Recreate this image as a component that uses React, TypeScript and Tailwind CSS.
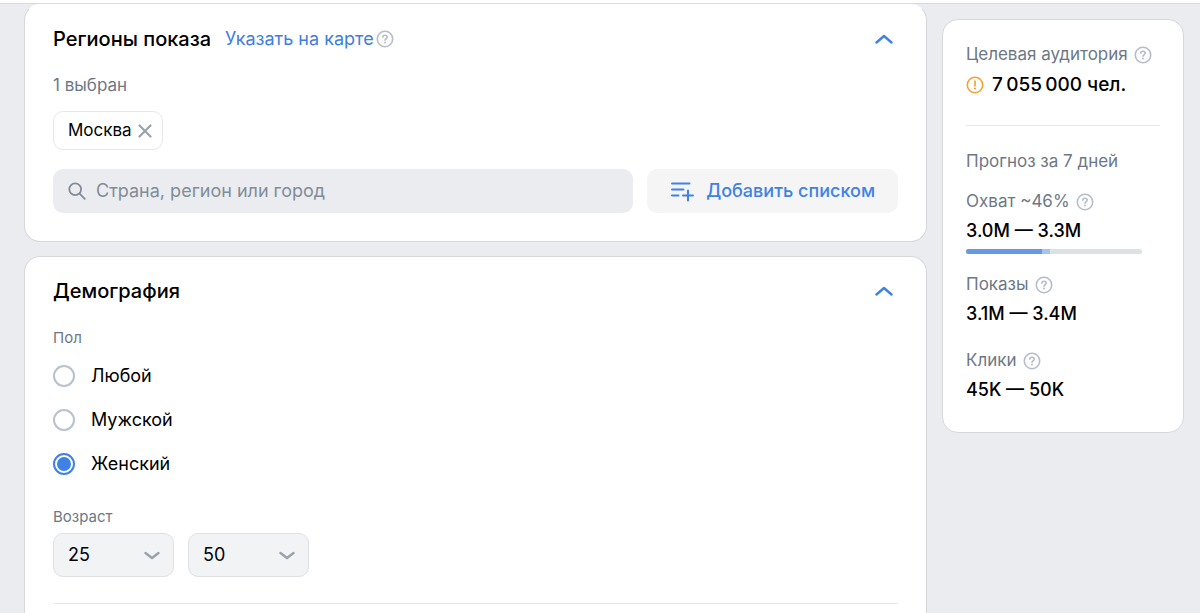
import { useState } from "react";
import type { ReactNode } from "react";

const genders = ["Любой", "Мужской", "Женский"];
const ages = Array.from({ length: 62 }, (_, i) => String(i + 14));

const HelpIcon = ({ label }: { label: string }) => (
  <button type="button" aria-label={label} className="shrink-0 text-[#b5bdca]">
    <svg width="18" height="18" viewBox="0 0 18 18" fill="none" stroke="currentColor" strokeLinecap="round" strokeLinejoin="round">
      <circle cx="9" cy="9" r="7.7" strokeWidth="1.6" />
      <path d="M6.8 7.2c0-1.2.9-2 2.2-2s2.2.8 2.2 1.9c0 .8-.4 1.2-1.1 1.7-.7.4-1.1.8-1.1 1.4" strokeWidth="1.6" />
      <circle cx="9" cy="12.6" r="1" fill="currentColor" stroke="none" />
    </svg>
  </button>
);

const WarningIcon = () => (
  <svg width="18" height="18" viewBox="0 0 18 18" fill="none" stroke="#f7a034" className="shrink-0" aria-hidden="true">
    <circle cx="9" cy="9" r="7.7" strokeWidth="1.6" />
    <path d="M9 5.1v4.6" strokeWidth="1.7" strokeLinecap="round" />
    <circle cx="9" cy="12.5" r="1.1" fill="#f7a034" stroke="none" />
  </svg>
);

const SearchIcon = () => (
  <svg width="18" height="18" viewBox="0 0 18 18" fill="none" stroke="#818c99" strokeWidth="1.8" strokeLinecap="round" className="shrink-0" aria-hidden="true">
    <circle cx="7.2" cy="7.2" r="5.9" />
    <path d="M11.6 11.6l5.2 5.2" />
  </svg>
);

const ListAddIcon = () => (
  <svg width="24" height="22" viewBox="0 0 24 22" fill="none" stroke="currentColor" strokeWidth="2" strokeLinecap="round" className="shrink-0" aria-hidden="true">
    <path d="M2 3.5h17.5M2 9.5h11.5M2 15.5h6.5M13 15.5h10M18 10.5v10" />
  </svg>
);

const SectionToggle = ({ label }: { label: string }) => (
  <button type="button" aria-label={label} className="ml-auto flex h-7 w-7 items-center justify-center text-[#3f82e6]">
    <svg width="18" height="10" viewBox="0 0 18 10" fill="none" stroke="currentColor" strokeWidth="2.4" strokeLinecap="round" strokeLinejoin="round">
      <path d="M1.5 8.5L9 2l7.5 6.5" />
    </svg>
  </button>
);

const AgeSelect = ({ label, initial }: { label: string; initial: string }) => {
  const [value, setValue] = useState(initial);

  return (
    <div className="relative w-[121px]">
      <select
        aria-label={label}
        value={value}
        onChange={(e) => setValue(e.target.value)}
        className="h-11 w-full appearance-none rounded-[10px] border border-[#dfe1e4] bg-[#f2f3f5] px-3.5 text-lg text-black"
      >
        {ages.map((age) => (
          <option key={age}>{age}</option>
        ))}
      </select>
      <svg width="16" height="9" viewBox="0 0 16 9" fill="none" stroke="#99a2ad" strokeWidth="2.4" strokeLinecap="round" strokeLinejoin="round" className="pointer-events-none absolute top-[18px] right-3.5" aria-hidden="true">
        <path d="M1.5 2L8 7l6.5-5" />
      </svg>
    </div>
  );
};

const StatLabel = ({ children, help }: { children: ReactNode; help: string }) => (
  <div className="flex h-5 items-center gap-1.5 text-[17px] whitespace-nowrap text-[#6d7885]">
    <span>{children}</span>
    <HelpIcon label={help} />
  </div>
);

const RegionsCard = () => (
  <section className="rounded-2xl border border-[#d7d8d9] border-t-transparent bg-white px-7 pt-5 pb-7">
    <div className="flex h-7 items-center">
      <h2 className="text-xl font-medium">Регионы показа</h2>
      <a href="#map" className="ml-3.5 text-lg text-[#3f7ee0]">
        Указать на карте
      </a>
      <div className="ml-0.5 flex">
        <HelpIcon label="Подсказка: регионы" />
      </div>
      <SectionToggle label="Свернуть регионы" />
    </div>

    <p className="mt-[22px] text-[17px] leading-5 text-[#6d7885]">1 выбран</p>

    <div className="mt-4 inline-flex h-[39px] items-center gap-1.5 rounded-[10px] border border-[#e7e8ea] pr-2.5 pl-3.5 text-[17px]">
      <span>Москва</span>
      <button type="button" aria-label="Удалить Москва" className="text-[#99a2ad]">
        <svg width="14" height="14" viewBox="0 0 14 14" fill="none" stroke="currentColor" strokeWidth="2.2" strokeLinecap="round">
          <path d="M1.5 1.5l11 11M12.5 1.5l-11 11" />
        </svg>
      </button>
    </div>

    <div className="mt-[19px] flex gap-3.5">
      <label className="flex h-11 flex-1 items-center gap-2.5 rounded-[10px] bg-[#ebecf0] px-[15px]">
        <SearchIcon />
        <input
          type="text"
          aria-label="Страна, регион или город"
          placeholder="Страна, регион или город"
          className="min-w-0 flex-1 bg-transparent text-lg outline-none placeholder:text-[#818c99]"
        />
      </label>
      <button type="button" className="flex h-11 items-center gap-3 rounded-[10px] bg-[#f5f5f5] px-[23px] text-lg font-medium text-[#3f82e6]">
        <ListAddIcon />
        Добавить списком
      </button>
    </div>
  </section>
);

const DemographyCard = () => {
  const [gender, setGender] = useState("Женский");

  return (
    <section className="flex-1 rounded-t-2xl border border-b-0 border-[#d7d8d9] bg-white px-7 pt-5">
      <div className="flex h-7 items-center">
        <h2 className="text-xl font-medium">Демография</h2>
        <SectionToggle label="Свернуть демографию" />
      </div>

      <fieldset className="mt-[23px]">
        <legend className="text-[15px] leading-5 text-[#6d7885]">Пол</legend>
        <div className="mt-1.5">
          {genders.map((item) => (
            <label key={item} className="flex h-11 items-center gap-4 text-lg">
              <input
                type="radio"
                name="gender"
                checked={gender === item}
                onChange={() => setGender(item)}
                className="h-[22px] w-[22px] appearance-none rounded-full border-2 border-[#b8c1cc] bg-clip-content p-[2px] checked:border-[#3f82e6] checked:bg-[#3f82e6]"
              />
              {item}
            </label>
          ))}
        </div>
      </fieldset>

      <fieldset className="mt-[21px]">
        <legend className="text-[15px] leading-5 text-[#6d7885]">Возраст</legend>
        <div className="mt-1.5 flex gap-3.5">
          <AgeSelect label="Возраст от" initial="25" />
          <AgeSelect label="Возраст до" initial="50" />
        </div>
      </fieldset>

      <hr className="mt-[26px] border-[#e7e8ec]" />
    </section>
  );
};

const ForecastCard = () => (
  <aside className="mt-[15px] w-[242px] shrink-0 self-start rounded-2xl border border-[#d7d8d9] bg-white px-[23px] pt-[25px] pb-[30px]">
    <StatLabel help="Подсказка: аудитория">Целевая аудитория</StatLabel>
    <div className="mt-2 flex h-6 items-center gap-2 text-[19px] font-medium whitespace-nowrap">
      <WarningIcon />
      7&#8201;055&#8201;000 чел.
    </div>

    <hr className="mt-7 border-[#e7e8ec]" />

    <h3 className="mt-[25px] text-[17px] leading-5 text-[#6d7885]">Прогноз за 7 дней</h3>

    <div className="mt-[21px]">
      <StatLabel help="Подсказка: охват">Охват ~46%</StatLabel>
      <p className="mt-[7px] text-lg leading-6 font-medium">3.0M — 3.3M</p>
      <div className="mt-1.5 mr-[18px] flex h-[5px] overflow-hidden rounded-full bg-[#dce1e6]">
        <div className="w-[43%] bg-[#6798e3]" />
        <div className="w-[5%] bg-[#a3c4ef]" />
      </div>
    </div>

    <div className="mt-[21px]">
      <StatLabel help="Подсказка: показы">Показы</StatLabel>
      <p className="mt-[7px] text-lg leading-6 font-medium">3.1M — 3.4M</p>
    </div>

    <div className="mt-[25px]">
      <StatLabel help="Подсказка: клики">Клики</StatLabel>
      <p className="mt-[7px] text-lg leading-6 font-medium">45K — 50K</p>
    </div>
  </aside>
);

const App = () => (
  <div className="flex min-h-screen flex-col bg-[#ebecf0] font-['Inter',sans-serif] text-black">
    <header className="h-1 border-b border-[#d7dbe0] bg-white" />
    <main className="flex flex-1 gap-[15px] pr-4 pl-6">
      <div className="flex min-w-0 flex-1 flex-col gap-3.5">
        <RegionsCard />
        <DemographyCard />
      </div>
      <ForecastCard />
    </main>
  </div>
);

export default App;
